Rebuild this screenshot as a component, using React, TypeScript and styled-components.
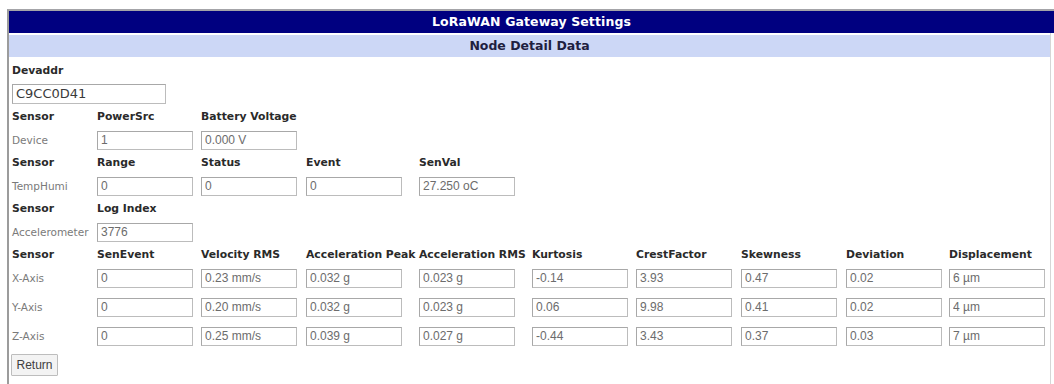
import styled, { createGlobalStyle } from 'styled-components'

const GlobalStyle = createGlobalStyle`
  html, body {
    margin: 0;
    padding: 0;
    background: #ffffff;
  }
  body {
    font-family: 'DejaVu Sans', Verdana, sans-serif;
  }
`

const COLUMNS = '85px 104px 105px 113px 113px 104px 105px 105px 103px 1fr'

const sections: { heads: string[]; rows: { name: string; values: string[] }[] }[] = [
  {
    heads: ['Sensor', 'PowerSrc', 'Battery Voltage'],
    rows: [{ name: 'Device', values: ['1', '0.000 V'] }],
  },
  {
    heads: ['Sensor', 'Range', 'Status', 'Event', 'SenVal'],
    rows: [{ name: 'TempHumi', values: ['0', '0', '0', '27.250 oC'] }],
  },
  {
    heads: ['Sensor', 'Log Index'],
    rows: [{ name: 'Accelerometer', values: ['3776'] }],
  },
  {
    heads: [
      'Sensor',
      'SenEvent',
      'Velocity RMS',
      'Acceleration Peak',
      'Acceleration RMS',
      'Kurtosis',
      'CrestFactor',
      'Skewness',
      'Deviation',
      'Displacement',
    ],
    rows: [
      { name: 'X-Axis', values: ['0', '0.23 mm/s', '0.032 g', '0.023 g', '-0.14', '3.93', '0.47', '0.02', '6 µm'] },
      { name: 'Y-Axis', values: ['0', '0.20 mm/s', '0.032 g', '0.023 g', '0.06', '9.98', '0.41', '0.02', '4 µm'] },
      { name: 'Z-Axis', values: ['0', '0.25 mm/s', '0.039 g', '0.027 g', '-0.44', '3.43', '0.37', '0.03', '7 µm'] },
    ],
  },
]

const App = () => {
  return (
    <>
      <GlobalStyle />
      <Frame>
        <TitleBar>LoRaWAN Gateway Settings</TitleBar>
        <Body>
          <SubTitle>Node Detail Data</SubTitle>
          <Table>
            <Row $kind="head">
              <HeadCell>Devaddr</HeadCell>
            </Row>
            <Row $kind="data">
              <WideCell>
                <AddrInput readOnly value="C9CC0D41" />
              </WideCell>
            </Row>
            {sections.map((section, i) => (
              <Section key={i}>
                <Row $kind="head">
                  {section.heads.map((h) => (
                    <HeadCell key={h}>{h}</HeadCell>
                  ))}
                </Row>
                {section.rows.map((row) => (
                  <Row $kind="data" key={row.name}>
                    <NameCell>{row.name}</NameCell>
                    {row.values.map((v, j) => (
                      <ValueCell key={j}>
                        <ValueInput readOnly value={v} />
                      </ValueCell>
                    ))}
                  </Row>
                ))}
              </Section>
            ))}
            <ButtonRow>
              <ReturnButton type="button">Return</ReturnButton>
            </ButtonRow>
          </Table>
        </Body>
      </Frame>
    </>
  )
}

export default App

const Frame = styled.div`
  margin: 9px 0 0 7px;
  border-top: 2px solid #a4a4a8;
  border-left: 2px solid #9c9c9c;
  min-height: 373px;
  box-sizing: border-box;
`

const TitleBar = styled.div`
  height: 22px;
  line-height: 22px;
  background: #000080;
  color: #ffffff;
  font-weight: bold;
  font-size: 12.5px;
  text-align: center;
  letter-spacing: 0.1px;
`

const Body = styled.div`
  margin-right: 3px;
  padding-top: 2px;
  border-right: 1px solid #d6d6d6;
  min-height: 349px;
`

const SubTitle = styled.div`
  height: 22px;
  line-height: 22px;
  background: #ccd7f6;
  color: #1e2040;
  font-weight: bold;
  font-size: 12.5px;
  text-align: center;
`

const Table = styled.div`
  padding: 5px 0 0 2px;
`

const Section = styled.div``

const Row = styled.div<{ $kind: 'head' | 'data' }>`
  display: grid;
  grid-template-columns: ${COLUMNS};
  height: ${(p) => (p.$kind === 'head' ? '17px' : '29px')};
  align-items: center;
`

const HeadCell = styled.div`
  padding: 0 1px;
  font-size: 10.8px;
  font-weight: bold;
  color: #2a2a2a;
  white-space: nowrap;
`

const NameCell = styled.div`
  padding: 0 1px;
  font-size: 10.5px;
  color: #7a7a7a;
  white-space: nowrap;
`

const ValueCell = styled.div`
  padding: 0 1px;
`

const WideCell = styled.div`
  grid-column: 1 / span 2;
  padding: 0 1px;
`

const Field = styled.input`
  box-sizing: border-box;
  height: 19px;
  margin: 0;
  border: 1px solid #bcbcbc;
  border-top-color: #a8a8a8;
  border-left-color: #a8a8a8;
  background: #ffffff;
  outline: none;
`

const ValueInput = styled(Field)`
  width: 96px;
  padding: 0 3px;
  font-family: 'Liberation Sans', Arial, sans-serif;
  font-size: 12px;
  color: #6c6c6c;
`

const AddrInput = styled(Field)`
  width: 154px;
  height: 20px;
  padding: 0 3px;
  font-family: 'DejaVu Sans', Verdana, sans-serif;
  font-size: 13px;
  color: #3a3a3a;
`

const ButtonRow = styled.div`
  padding: 4px 0 0 0;
`

const ReturnButton = styled.button`
  box-sizing: border-box;
  width: 47px;
  height: 22px;
  margin: 0;
  padding: 0;
  border: 1px solid #bdbdbd;
  border-radius: 1px;
  background: #f3f3f3;
  font-family: 'Liberation Sans', Arial, sans-serif;
  font-size: 12px;
  color: #404040;
`
